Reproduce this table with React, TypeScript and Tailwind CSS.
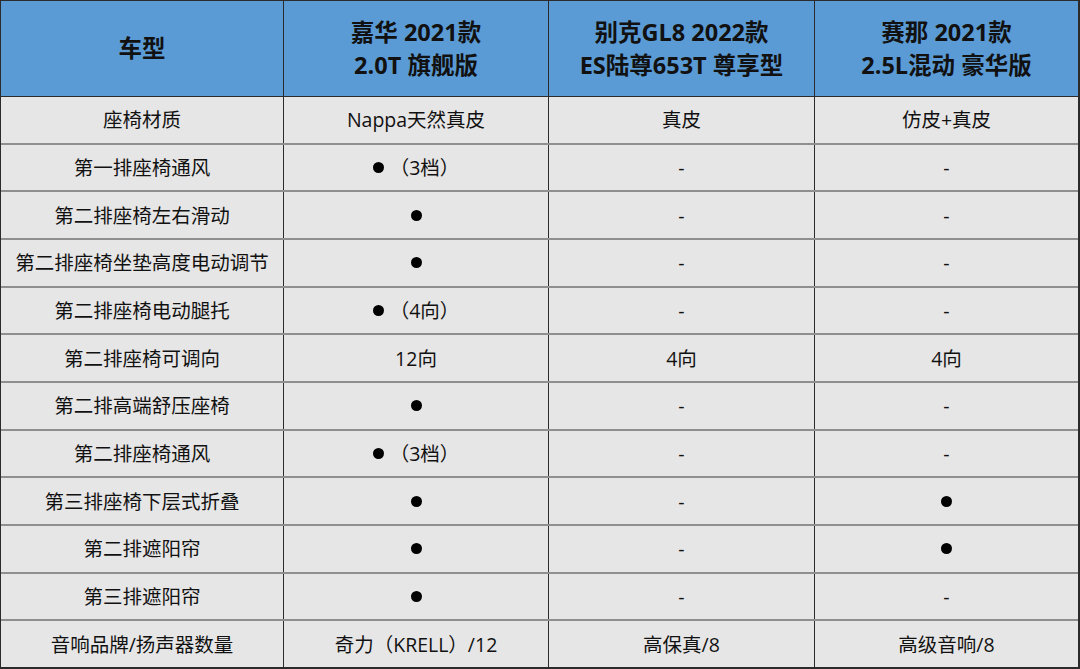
const head = ['车型', '嘉华 2021款\n2.0T 旗舰版', '别克GL8 2022款\nES陆尊653T 尊享型', '赛那 2021款\n2.5L混动 豪华版']

const rows: string[][] = [
  ['座椅材质', 'Nappa天然真皮', '真皮', '仿皮+真皮'],
  ['第一排座椅通风', '●（3档）', '-', '-'],
  ['第二排座椅左右滑动', '●', '-', '-'],
  ['第二排座椅坐垫高度电动调节', '●', '-', '-'],
  ['第二排座椅电动腿托', '●（4向）', '-', '-'],
  ['第二排座椅可调向', '12向', '4向', '4向'],
  ['第二排高端舒压座椅', '●', '-', '-'],
  ['第二排座椅通风', '●（3档）', '-', '-'],
  ['第三排座椅下层式折叠', '●', '-', '●'],
  ['第二排遮阳帘', '●', '-', '●'],
  ['第三排遮阳帘', '●', '-', '-'],
  ['音响品牌/扬声器数量', '奇力（KRELL）/12', '高保真/8', '高级音响/8'],
]

function Cell({ text }: { text: string }) {
  if (text.startsWith('●')) {
    const rest = text.slice(1)
    return (
      <span className="flex items-center">
        <span className="inline-block h-[11px] w-[11px] rounded-full bg-black" />
        {rest && <span className="ml-[6px]">{rest}</span>}
      </span>
    )
  }
  return <span>{text}</span>
}

export default function App() {
  const cols = 'grid grid-cols-[283px_265px_266px_1fr]'
  return (
    <div
      className="flex h-[669px] w-[1080px] flex-col border-t border-l border-r-2 border-b-2 border-[#2b2b2b] bg-[#e7e6e6] text-[#111]"
      style={{ fontFamily: '"Open Sans", "Noto Sans CJK SC", sans-serif' }}
    >
      <div className={`${cols} h-[96px] shrink-0 border-b border-[#2b2b2b] bg-[#5b9bd5]`}>
        {head.map((h, i) => (
          <div
            key={i}
            className={`flex flex-col items-center justify-center whitespace-pre text-center text-[23.5px] font-bold leading-[33px] ${i < 3 ? 'border-r border-[#2b2b2b]' : ''}`}
          >
            {h}
          </div>
        ))}
      </div>
      {rows.map((r, ri) => (
        <div
          key={ri}
          className={`${cols} flex-1 ${ri < rows.length - 1 ? 'border-b-2 border-[#8f8f8f]' : ''}`}
        >
          {r.map((c, ci) => (
            <div
              key={ci}
              className={`flex items-center justify-center text-[19.5px] ${ci < 3 ? 'border-r border-[#2b2b2b]' : ''}`}
            >
              <Cell text={c} />
            </div>
          ))}
        </div>
      ))}
    </div>
  )
}
